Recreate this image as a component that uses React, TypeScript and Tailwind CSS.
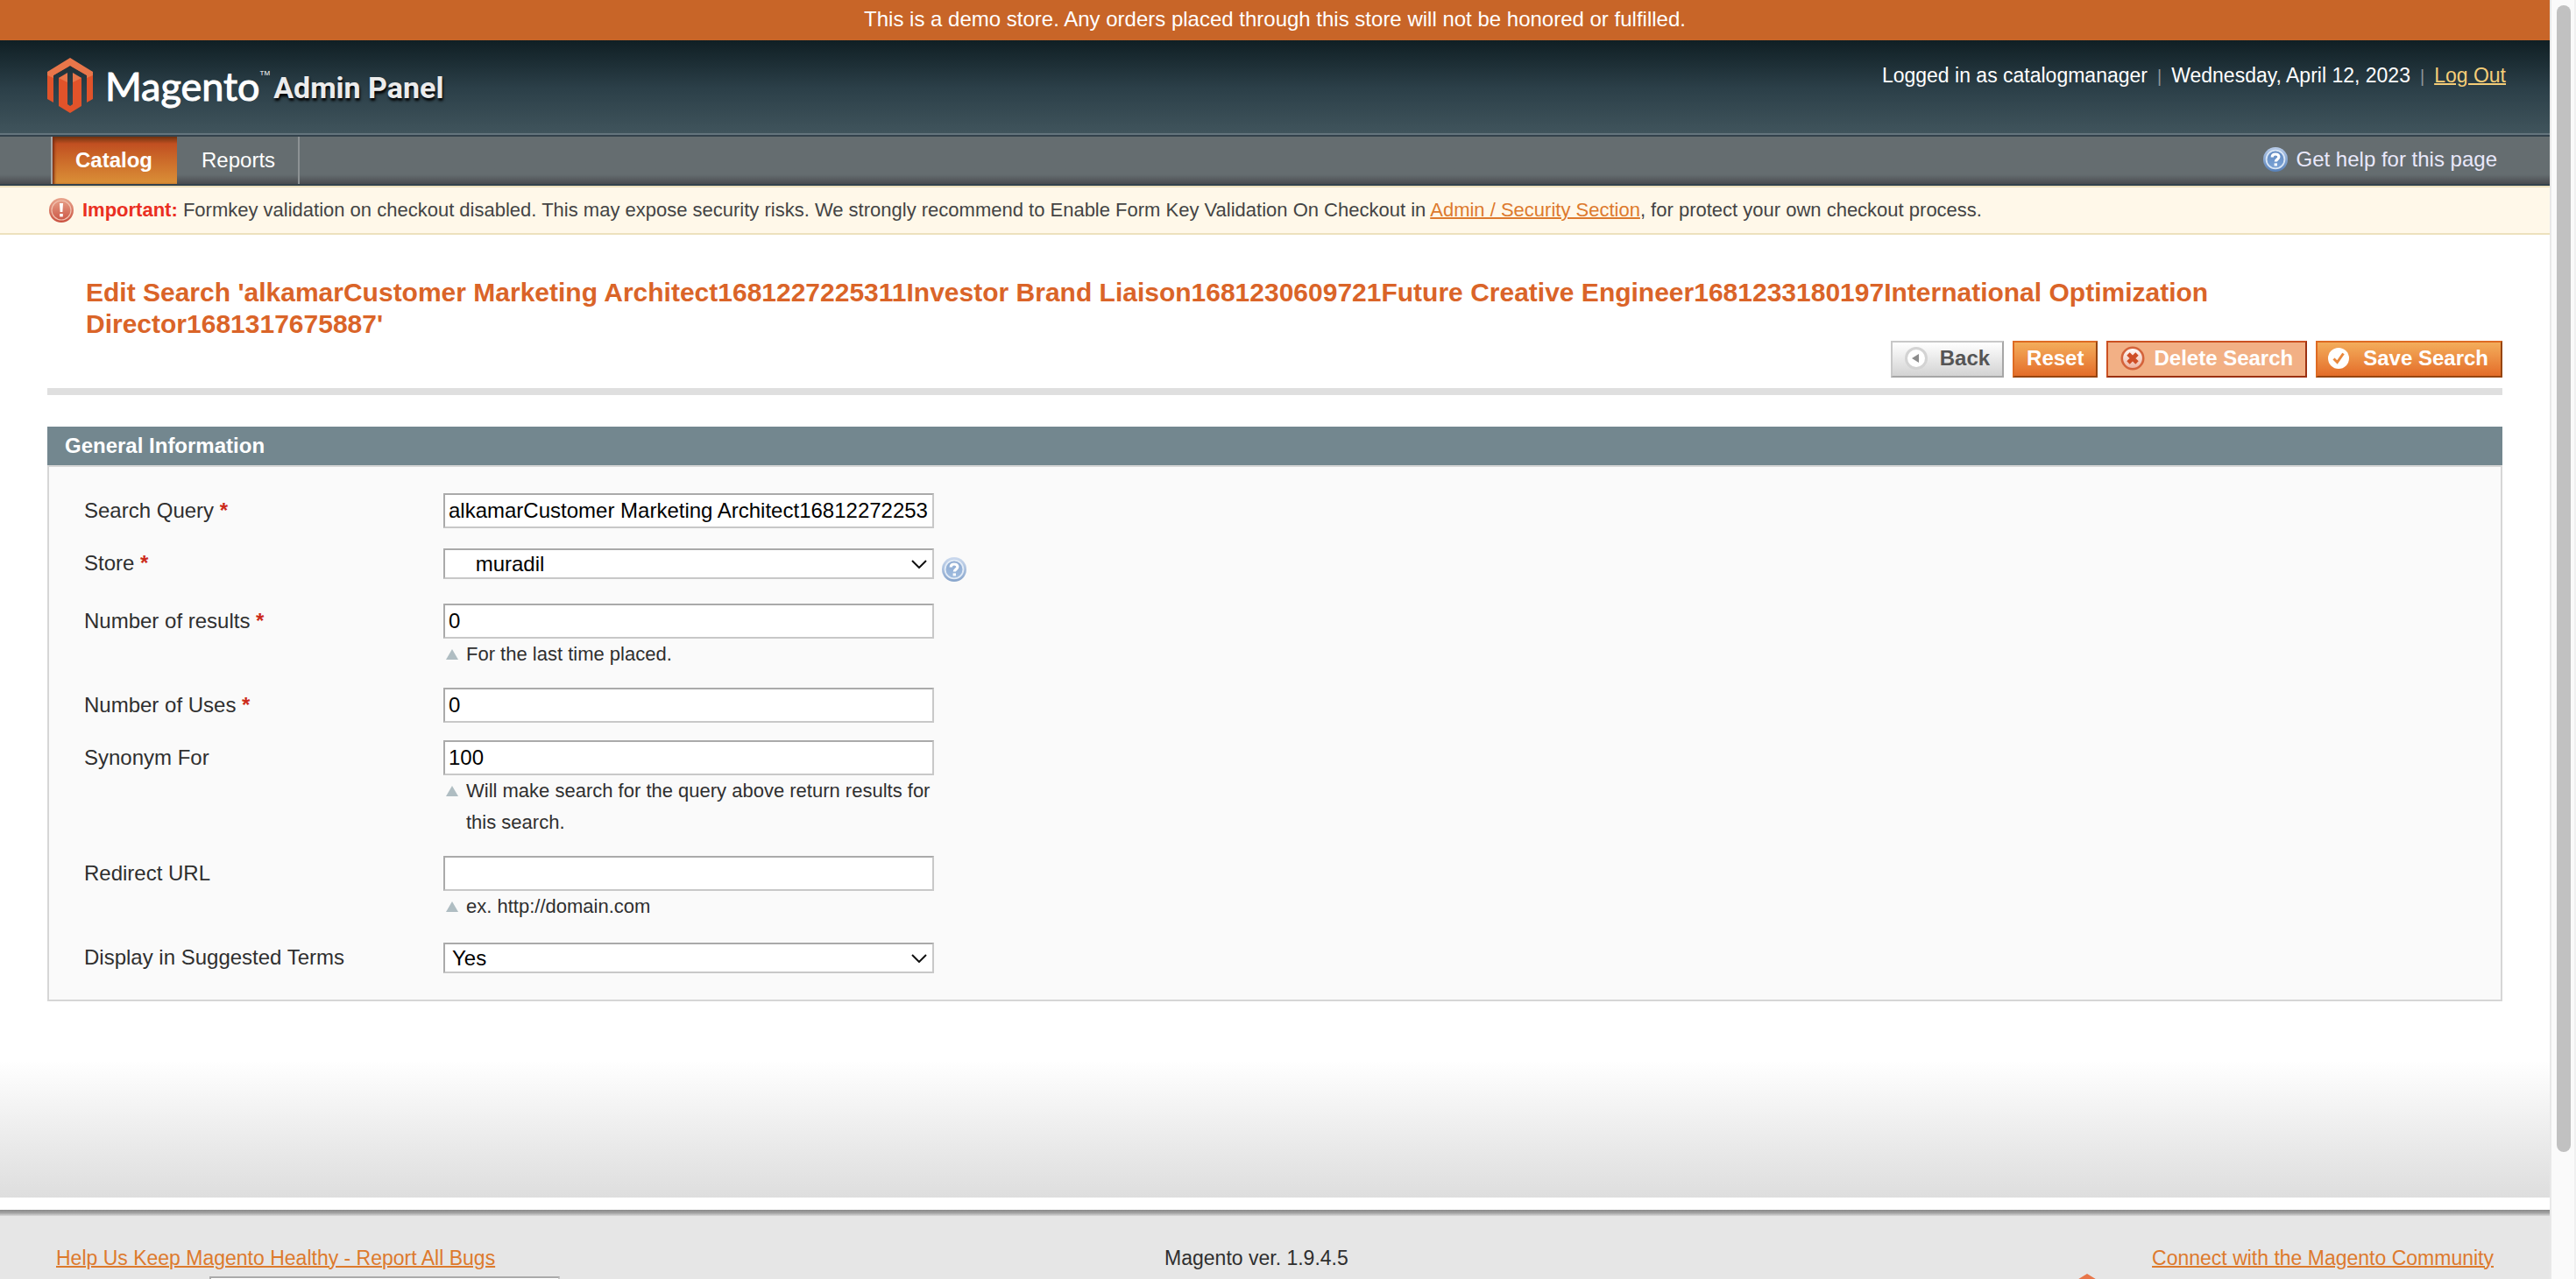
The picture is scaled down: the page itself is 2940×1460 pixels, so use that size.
import React from "react";

function MagentoMark({ className }: { className: string }) {
  return (
    <svg viewBox="0 0 52 63" className={className} aria-hidden="true">
      <path d="M0 16 26 9 52 16V47L45 51V20L26 9 7 20V51L0 47Z" fill="#e1532a" />
      <path d="M13 23 23 19V53L26 55 29 53V19L39 23V55L26 63 13 55Z" fill="#e1532a" />
      <path d="M26 0 52 16V20L45 23V20L26 9 7 20V23L0 20V16Z" fill="#e8764a" />
      <path d="M13 23 23 17V28Z" fill="#e8764a" />
      <path d="M39 23 29 17V28Z" fill="#e8764a" />
    </svg>
  );
}

function HelpIcon({ className }: { className: string }) {
  return (
    <svg viewBox="0 0 28 28" className={className} aria-hidden="true">
      <defs>
        <linearGradient id="helpFill" x1="0" y1="0" x2="0" y2="1">
          <stop offset="0" stopColor="#5f88c0" />
          <stop offset="1" stopColor="#7ca4d6" />
        </linearGradient>
        <linearGradient id="helpRim" x1="0" y1="0" x2="0" y2="1">
          <stop offset="0" stopColor="#b9cdea" />
          <stop offset="1" stopColor="#5680b8" />
        </linearGradient>
      </defs>
      <circle cx="14" cy="14" r="14" fill="url(#helpRim)" />
      <circle cx="14" cy="14" r="10.4" fill="url(#helpFill)" stroke="#d9e6f5" strokeWidth="1.8" />
      <path d="M10.2 11.4C10.2 9 11.7 8 14 8s3.9 1.1 3.9 3.1c0 2.8-3.6 2.7-3.6 5.4" fill="none" stroke="#fff" strokeWidth="3.2" />
      <rect x="12.6" y="18.4" width="3.4" height="3" fill="#fff" />
    </svg>
  );
}

function ImportantIcon() {
  return (
    <svg viewBox="0 0 28 28" className="size-7" aria-hidden="true">
      <defs>
        <linearGradient id="alertFill" x1="0" y1="0" x2="0" y2="1">
          <stop offset="0" stopColor="#e9a58d" />
          <stop offset="1" stopColor="#c9503f" />
        </linearGradient>
      </defs>
      <circle cx="14" cy="14" r="14" fill="url(#alertFill)" />
      <circle cx="14" cy="14" r="11" fill="none" stroke="#f0c0ae" strokeWidth="1.2" />
      <path d="M12 6h4l-.6 10h-2.8Z" fill="#fff" />
      <rect x="12.2" y="18" width="3.6" height="3.4" fill="#fff" />
    </svg>
  );
}

function BackIcon() {
  return (
    <svg viewBox="0 0 26 26" className="size-[26px]" aria-hidden="true">
      <circle cx="13" cy="13" r="11.5" fill="#fff" stroke="#d3d3d3" strokeWidth="3" />
      <path d="M8 13 16 8V18Z" fill="#8c8c8c" />
    </svg>
  );
}

function DeleteIcon() {
  return (
    <svg viewBox="0 0 28 28" className="size-7" aria-hidden="true">
      <defs>
        <linearGradient id="deleteFill" x1="0" y1="0" x2="0" y2="1">
          <stop offset="0" stopColor="#ffffff" />
          <stop offset="1" stopColor="#eeb09c" />
        </linearGradient>
      </defs>
      <circle cx="14" cy="14" r="12.2" fill="url(#deleteFill)" stroke="#d4633b" strokeWidth="2.6" />
      <path d="M9 9 19 19M19 9 9 19" stroke="#cf4e26" strokeWidth="4.8" />
    </svg>
  );
}

function SaveIcon() {
  return (
    <svg viewBox="0 0 24 24" className="size-6" aria-hidden="true">
      <circle cx="12" cy="12" r="12" fill="#fff" />
      <path d="M6.5 12.5 10.5 16.5 17.5 6.5" fill="none" stroke="#e9883d" strokeWidth="3" />
    </svg>
  );
}

function Field({
  id,
  label,
  required,
  hint,
  children,
}: {
  id: string;
  label: string;
  required?: boolean;
  hint?: string;
  children: React.ReactNode;
}) {
  return (
    <div className="flex items-start py-2.5">
      <label htmlFor={id} className="w-[410px] shrink-0 leading-10">
        {label} {required && <span className="font-bold text-[#cc2a1b]">*</span>}
      </label>
      <div>
        {children}
        {hint && (
          <p className="flex w-[560px] text-[22px] leading-9">
            <svg viewBox="0 0 14 12" className="mt-3 mr-[9px] ml-[3px] h-3 w-3.5 shrink-0" aria-hidden="true">
              <path d="M7 0 14 12H0Z" fill="#afbdc2" />
            </svg>
            <span>{hint}</span>
          </p>
        )}
      </div>
    </div>
  );
}

function TextInput({ id, value }: { id: string; value: string }) {
  return (
    <input
      id={id}
      type="text"
      defaultValue={value}
      className="block h-10 w-[560px] border-2 border-t-[#aaaaaa] border-r-[#c8c8c8] border-b-[#c8c8c8] border-l-[#aaaaaa] bg-white px-1 text-black"
    />
  );
}

function SelectInput({ id, options, help }: { id: string; options: string[]; help?: boolean }) {
  return (
    <div className="flex h-[46px] items-start pt-[3px]">
      <div className="relative w-[560px]">
        <select
          id={id}
          className="block h-[35px] w-full appearance-none border-2 border-t-[#aaaaaa] border-r-[#c8c8c8] border-b-[#c8c8c8] border-l-[#aaaaaa] bg-white px-2 leading-7 text-black"
        >
          {options.map((o) => (
            <option key={o}>{o}</option>
          ))}
        </select>
        <svg viewBox="0 0 18 10" className="pointer-events-none absolute top-[13px] right-2 h-2.5 w-[18px]" aria-hidden="true">
          <path d="M1 1 9 9 17 1" fill="none" stroke="#111" strokeWidth="2" />
        </svg>
      </div>
      {help && <HelpIcon className="mt-2.5 ml-[9px] size-7 opacity-70" />}
    </div>
  );
}

const orangeButton =
  "flex h-[42px] items-center border-2 border-t-[#de6b23] border-r-[#964510] border-b-[#964510] border-l-[#de6b23] bg-linear-to-b from-[#f3ad5b] to-[#e36c28] pb-0.5 font-bold text-white";

export default function App() {
  return (
    <div className="flex h-screen overflow-hidden bg-white font-['Liberation_Sans',Arial,sans-serif] text-2xl text-[#2f2f2f]">
      <div className="flex min-w-0 flex-1 flex-col">
        <p className="h-[46px] shrink-0 bg-[#c86528] text-center leading-[44px] text-white">
          This is a demo store. Any orders placed through this store will not be honored or fulfilled.
        </p>

        <header className="flex h-[110px] shrink-0 items-start justify-between border-b-2 border-[#33424c] bg-linear-to-b from-[#101f24] via-[#2b3f48] to-[#41555d] pr-[50px] pl-[54px] shadow-[inset_0_-2px_0_#64757d]">
          <a href="#" className="flex h-[108px] items-start pt-5 text-white" aria-label="Magento Admin Panel">
            <MagentoMark className="h-[63px] w-[52px]" />
            <span className="ml-3.5 font-[Lato,sans-serif] text-[45px] leading-[64px] [-webkit-text-stroke:1px_#ffffff]">
              Magento
            </span>
            <span className="pt-2 text-[8px] leading-[20px]">TM</span>
            <span className="ml-1 font-[Roboto,sans-serif] text-[34px] leading-[68px] font-bold text-[#ececec] [text-shadow:1px_3px_3px_#000000]">
              Admin Panel
            </span>
          </a>
          <p className="flex items-baseline gap-[11px] pt-6 text-[23px] leading-8 text-white">
            <span>Logged in as catalogmanager</span>
            <span className="text-xl text-[#8d9699]">|</span>
            <span>Wednesday, April 12, 2023</span>
            <span className="text-xl text-[#8d9699]">|</span>
            <a href="#" className="text-[#f5cd77] underline decoration-2">
              Log Out
            </a>
          </p>
        </header>

        <nav className="flex h-14 shrink-0 items-stretch justify-between border-b-2 border-[#33424c] bg-linear-to-b from-[#656d70] from-80% to-[#4a4c50] pr-[60px] pl-[58px] text-white">
          <div className="flex">
            <a
              href="#"
              className="border-l-2 border-[#a5a8aa] bg-linear-to-b from-[#6f3410] via-[#c14f21] via-15% to-[#da9037] pr-7 pl-[26px] leading-[54px] font-bold shadow-[inset_3px_0_3px_-1px_#7c2d12]"
            >
              Catalog
            </a>
            <a href="#" className="border-r-2 border-[#8d9294] pr-[26px] pl-7 leading-[54px]">
              Reports
            </a>
          </div>
          <a href="#" className="flex items-center gap-[10px] pb-0.5 text-[#e9e8fb]">
            <HelpIcon className="size-7" />
            Get help for this page
          </a>
        </nav>

        <div className="flex h-14 shrink-0 items-center border-y-2 border-[#ede1bd] bg-[#fff8e9] pl-14 text-[22px] text-[#444444]">
          <ImportantIcon />
          <p className="ml-2.5">
            <strong className="text-[#ea2f22]">Important:</strong> Formkey validation on checkout disabled. This may
            expose security risks. We strongly recommend to Enable Form Key Validation On Checkout in{" "}
            <a href="#" className="text-[#dd7a2d] underline decoration-2">
              Admin / Security Section
            </a>
            , for protect your own checkout process.
          </p>
        </div>

        <main className="shrink-0 px-[54px] pt-12">
          <div className="border-b-8 border-[#dfdfdf] pb-3">
            <h3 className="pr-20 pl-11 text-3xl leading-9 font-bold text-[#da6428]">
              Edit Search 'alkamarCustomer Marketing Architect1681227225311Investor Brand Liaison1681230609721Future
              Creative Engineer1681233180197International Optimization Director1681317675887'
            </h3>
            <div className="mt-px flex justify-end gap-2.5">
              <button
                type="button"
                className="flex h-[42px] items-center gap-3.5 border-2 border-t-[#c8c8c8] border-r-[#a6a6a6] border-b-[#a6a6a6] border-l-[#c8c8c8] bg-linear-to-b from-white to-[#d3d3d3] px-3.5 pb-0.5 font-bold text-[#555555]"
              >
                <BackIcon />
                Back
              </button>
              <button type="button" className={`${orangeButton} px-3.5`}>
                Reset
              </button>
              <button
                type="button"
                className="flex h-[42px] items-center gap-2.5 border-2 border-t-[#cb5122] border-r-[#9b3012] border-b-[#9b3012] border-l-[#cb5122] bg-[#f2b085] px-3.5 pb-0.5 font-bold text-white"
              >
                <DeleteIcon />
                Delete Search
              </button>
              <button type="button" className={`${orangeButton} gap-4 pr-3.5 pl-3`}>
                <SaveIcon />
                Save Search
              </button>
            </div>
          </div>

          <section className="mt-9">
            <h4 className="bg-[#73878f] pl-5 leading-[44px] font-bold text-white">General Information</h4>
            <form className="border-2 border-[#d6d6d6] bg-[#fafafa] pt-5 pb-3 pl-10">
              <Field id="query" label="Search Query" required>
                <TextInput
                  id="query"
                  value="alkamarCustomer Marketing Architect1681227225311Investor Brand Liaison1681230609721Future Creative Engineer1681233180197International Optimization Director1681317675887"
                />
              </Field>
              <Field id="store" label="Store" required>
                <SelectInput id="store" options={["\u00a0\u00a0\u00a0\u00a0muradil"]} help />
              </Field>
              <Field id="results" label="Number of results" required hint="For the last time placed.">
                <TextInput id="results" value="0" />
              </Field>
              <Field id="uses" label="Number of Uses" required>
                <TextInput id="uses" value="0" />
              </Field>
              <Field
                id="synonym"
                label="Synonym For"
                hint="Will make search for the query above return results for this search."
              >
                <TextInput id="synonym" value="100" />
              </Field>
              <Field id="redirect" label="Redirect URL" hint="ex. http://domain.com">
                <TextInput id="redirect" value="" />
              </Field>
              <Field id="display" label="Display in Suggested Terms">
                <SelectInput id="display" options={["Yes", "No"]} />
              </Field>
            </form>
          </section>
        </main>

        <div className="h-56 shrink-0 bg-linear-to-b from-white from-30% via-[#e9e9e9] via-75% to-[#dedede]" />

        <footer className="mt-3.5 shrink-0 bg-[#e6e6e6] text-[23px]">
          <div className="h-[7px] bg-linear-to-b from-[#8a8a8a] via-[#a2a2a2] to-[#d8d8d8]" />
          <div className="grid grid-cols-[30fr_auto_31fr] px-16 pt-8 leading-8">
            <div>
              <a href="#" className="text-[#dd7a2d] underline decoration-2">
                Help Us Keep Magento Healthy - Report All Bugs
              </a>
              <select
                aria-label="Interface language"
                className="mt-[5px] ml-[175px] block h-9 w-[400px] appearance-none border-2 border-t-[#aaaaaa] border-r-[#c8c8c8] border-b-[#c8c8c8] border-l-[#aaaaaa] bg-white"
              />
            </div>
            <p>Magento ver. 1.9.4.5</p>
            <div className="text-right">
              <a href="#" className="text-[#dd7a2d] underline decoration-2">
                Connect with the Magento Community
              </a>
              <MagentoMark className="mt-0.5 mr-[438px] ml-auto h-[63px] w-[52px]" />
            </div>
          </div>
        </footer>
      </div>

      <div className="w-[30px] shrink-0 border-r-2 border-l-2 border-r-[#f0f0f0] border-l-[#e8e8e8] bg-[#fafafa] pt-1.5 pl-1.5" aria-hidden="true">
        <div className="h-[90%] w-4 rounded-full bg-[#c1c1c1]" />
      </div>
    </div>
  );
}
